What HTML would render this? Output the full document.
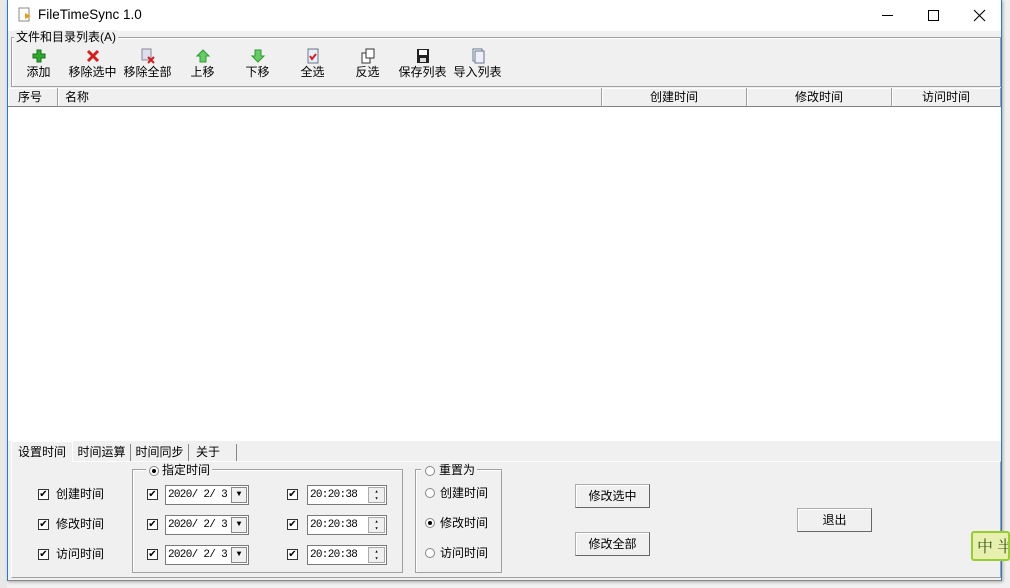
<!DOCTYPE html>
<html><head><meta charset="utf-8"><style>
*{box-sizing:border-box;margin:0;padding:0}
body{width:1010px;height:588px;overflow:hidden;background:#f0f0f0;font-family:"Liberation Sans","Noto Sans CJK SC",sans-serif;font-size:12px;color:#000;position:relative}
.a{position:absolute}
.win{left:7px;top:0;width:995px;height:581px;background:#f0f0f0;border:1px solid #2b79c9;border-top:none;border-bottom-color:#888;box-shadow:1px 1px 3px rgba(0,0,0,.3)}
.title{left:0;top:0;width:993px;height:31px;background:#fff}
.gb{border:1px solid #a0a0a0;box-shadow:inset 1px 1px 0 #fff}
.lbl{background:#f0f0f0;padding:0 2px;line-height:14px}
.tb{width:55px;text-align:center;top:48px}
.tb svg{display:block;margin:0 auto;height:16px;width:16px}
.tb span{display:block;margin-top:1px;line-height:14px}
.hd{top:88px;height:19px;border-right:1px solid #a0a0a0;border-bottom:1px solid #808080;background:#f0f0f0;line-height:18px;box-shadow:inset 1px 1px 0 #fff}
.cb{width:11px;height:11px;border:1px solid #333;background:#fff;font-size:10px;line-height:9px;text-align:center}
.dt{height:20px;border:1px solid #7a7a7a;background:#fff;font-family:"Liberation Mono",monospace;font-size:11px;line-height:18px;padding-left:2px;letter-spacing:-0.7px;white-space:nowrap}
.btn{border:1px solid #adadad;border-right-color:#666;border-bottom-color:#666;background:#f0f0f0;text-align:center;line-height:22px;width:75px;height:24px;box-shadow:inset 1px 1px 0 #fff}
.rd{width:10px;height:10px;border-radius:50%;border:1px solid #888;background:#fff}
.dot{position:absolute;left:2px;top:2px;width:4px;height:4px;border-radius:50%;background:#000}
</style></head><body>
<div class="a" style="left:0;top:0;width:7px;height:588px;background:#e8e8e8"></div>
<div class="a win">
 <div class="a title">
  <svg class="a" style="left:9px;top:7px" width="16" height="16"><rect x="2" y="1" width="10" height="13" fill="#fff" stroke="#888"/><path d="M8 6l6 3-6 3z" fill="#e0a020"/></svg>
  <div class="a" style="left:30px;top:7px;font-size:13.5px">FileTimeSync 1.0</div>
  <div class="a" style="left:874px;top:15px;width:11px;height:1px;background:#000"></div>
  <div class="a" style="left:920px;top:10px;width:11px;height:11px;border:1px solid #000"></div>
  <svg class="a" style="left:965px;top:9px" width="13" height="13"><path d="M1 1L12 12M12 1L1 12" stroke="#000" stroke-width="1.1"/></svg>
 </div>
 <div class="a gb" style="left:3px;top:37px;width:990px;height:50px"></div>
 <div class="a lbl" style="left:6px;top:30px">文件和目录列表(A)</div>
 <div class="a tb" style="left:3px"><svg><path d="M6 2h4v4h4v4h-4v4h-4v-4h-4v-4h4z" fill="#2eaa2e" stroke="#1a701a"/></svg><span>添加</span></div>
 <div class="a tb" style="left:57px"><svg><path d="M3 3l10 10M13 3L3 13" stroke="#d02020" stroke-width="3"/></svg><span>移除选中</span></div>
 <div class="a tb" style="left:112px"><svg><rect x="2" y="1" width="9" height="11" fill="#dde" stroke="#889"/><path d="M8 9l6 6M14 9l-6 6" stroke="#d02020" stroke-width="2"/></svg><span>移除全部</span></div>
 <div class="a tb" style="left:167px"><svg><path d="M8 2l6 6h-3v6h-6v-6h-3z" fill="#6c6" stroke="#393"/></svg><span>上移</span></div>
 <div class="a tb" style="left:222px"><svg><path d="M8 14l6-6h-3v-6h-6v6h-3z" fill="#6c6" stroke="#393"/></svg><span>下移</span></div>
 <div class="a tb" style="left:277px"><svg><rect x="3" y="1" width="10" height="14" fill="#e8eef8" stroke="#678"/><path d="M5 8l2 3 4-5" stroke="#d02020" stroke-width="2" fill="none"/></svg><span>全选</span></div>
 <div class="a tb" style="left:332px"><svg><rect x="2" y="5" width="8" height="10" fill="#fff" stroke="#333"/><rect x="6" y="1" width="8" height="9" fill="#fff" stroke="#333"/></svg><span>反选</span></div>
 <div class="a tb" style="left:387px"><svg><rect x="2" y="1" width="12" height="14" fill="#222"/><rect x="4" y="2" width="8" height="5" fill="#fff"/><rect x="5" y="10" width="6" height="4" fill="#ddd"/></svg><span>保存列表</span></div>
 <div class="a tb" style="left:442px"><svg><rect x="3" y="1" width="9" height="12" fill="#fff" stroke="#678"/><rect x="5" y="3" width="9" height="12" fill="#eef" stroke="#678"/></svg><span>导入列表</span></div>
 <div class="a hd" style="left:0;width:50px;padding-left:10px">序号</div>
 <div class="a hd" style="left:50px;width:544px;padding-left:7px">名称</div>
 <div class="a hd" style="left:594px;width:145px;text-align:center">创建时间</div>
 <div class="a hd" style="left:739px;width:145px;text-align:center">修改时间</div>
 <div class="a hd" style="left:884px;width:109px;text-align:center">访问时间</div>
 <div class="a" style="left:0;top:107px;width:993px;height:334px;background:#fff"></div>
 <div class="a" style="left:3px;top:461px;width:990px;height:117px;border:1px solid #fff;border-right-color:#a0a0a0;border-bottom-color:#a0a0a0"></div>
 <div class="a" style="left:3px;top:441px;width:62px;height:21px;background:#f0f0f0;border:1px solid #fff;border-bottom:none;line-height:20px;text-align:center">设置时间</div>
 <div class="a" style="left:65px;top:444px;width:58px;height:17px;border-right:1px solid #888;line-height:17px;text-align:center">时间运算</div>
 <div class="a" style="left:123px;top:444px;width:58px;height:17px;border-right:1px solid #888;line-height:17px;text-align:center">时间同步</div>
 <div class="a" style="left:181px;top:444px;width:48px;height:17px;border-right:1px solid #888;line-height:17px;padding-left:7px">关于</div>
 <div class="a cb" style="left:30px;top:489px">✔</div><div class="a" style="left:48px;top:486px;line-height:16px">创建时间</div>
 <div class="a cb" style="left:30px;top:519px">✔</div><div class="a" style="left:48px;top:516px;line-height:16px">修改时间</div>
 <div class="a cb" style="left:30px;top:549px">✔</div><div class="a" style="left:48px;top:546px;line-height:16px">访问时间</div>
 <div class="a gb" style="left:124px;top:469px;width:271px;height:104px"></div>
 <div class="a lbl" style="left:138px;top:463px;padding-left:16px">指定时间</div>
 <div class="a rd" style="left:141px;top:466px"><div class="dot"></div></div>
 <div class="a gb" style="left:407px;top:469px;width:87px;height:104px"></div>
 <div class="a lbl" style="left:413px;top:463px;padding-left:18px">重置为</div>
 <div class="a rd" style="left:417px;top:466px"></div>
 <div class="a rd" style="left:417px;top:488px"></div><div class="a" style="left:432px;top:485px;line-height:16px">创建时间</div>
 <div class="a rd" style="left:417px;top:518px"><div class="dot"></div></div><div class="a" style="left:432px;top:515px;line-height:16px">修改时间</div>
 <div class="a rd" style="left:417px;top:548px"></div><div class="a" style="left:432px;top:545px;line-height:16px">访问时间</div>
 <div class="a btn" style="left:567px;top:484px">修改选中</div>
 <div class="a btn" style="left:567px;top:532px">修改全部</div>
 <div class="a btn" style="left:789px;top:508px">退出</div>
</div>
<div id="rows"></div>
<script>
var ys=[485,515,545],h='';
ys.forEach(function(y){
h+='<div class="a cb" style="left:147px;top:'+(y+4)+'px">✔</div>';
h+='<div class="a dt" style="left:165px;top:'+y+'px;width:84px">2020/ 2/ 3<div class="a" style="right:1px;top:1px;width:16px;height:16px;background:#f0f0f0;border:1px solid #888;text-align:center;font-size:8px;line-height:14px;letter-spacing:0">▼</div></div>';
h+='<div class="a cb" style="left:287px;top:'+(y+4)+'px">✔</div>';
h+='<div class="a dt" style="left:307px;top:'+y+'px;width:80px">20:20:38<div class="a" style="right:1px;top:1px;width:17px;height:16px;background:#f0f0f0;border:1px solid #aaa;font-size:6px;line-height:7px;text-align:center;letter-spacing:0">▴<br>▾</div></div>';
});
document.getElementById('rows').innerHTML=h;
</script>
<div class="a" style="left:971px;top:531px;width:39px;height:30px;background:#e8f0b0;border:2px solid #9c3;border-radius:3px;color:#3a5a1a;font-size:16px;line-height:26px;padding-left:4px;white-space:nowrap;overflow:hidden;font-family:'Noto Serif CJK SC',serif">中 半</div>
</body></html>
